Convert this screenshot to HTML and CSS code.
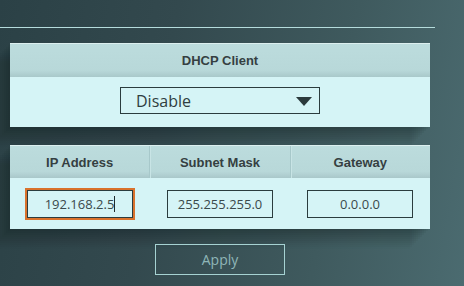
FILE: index.html
```html
<!DOCTYPE html>
<html lang="en">
<head>
  <meta charset="UTF-8" />
  <meta name="viewport" content="width=device-width, initial-scale=1.0" />
  <title>LAN Settings</title>
  <link rel="stylesheet" href="styles.css">
</head>

<body>
  <div class="top-line"></div>

  <div class="panel dhcp">
    <div class="panel-head">
      <div class="cell">DHCP Client</div>
    </div>
    <div class="panel-body">
      <div class="select">
        <span>Disable</span>
        <span class="arrow"></span>
      </div>
    </div>
  </div>

  <div class="panel addr">
    <div class="panel-head">
      <div class="cell">IP Address</div>
      <div class="cell">Subnet Mask</div>
      <div class="cell">Gateway</div>
    </div>
    <div class="panel-body cols">
      <div class="cell"><div class="field focus">192.168.2.5<span class="caret"></span></div></div>
      <div class="cell"><div class="field">255.255.255.0</div></div>
      <div class="cell"><div class="field">0.0.0.0</div></div>
    </div>
  </div>

  <div class="actions">
    <button class="apply">Apply</button>
  </div>
</body>
</html>
```

FILE: styles.css
```css
* {
  margin: 0;
  padding: 0;
  box-sizing: border-box;
}

html, body {
  width: 100%;
  height: 100%;
}

body {
  overflow: hidden;
  font-family: "Open Sans", sans-serif;
  background: linear-gradient(100deg, #2b4146 0%, #33494e 35%, #3f5a5e 70%, #4b6b70 100%);
}

.top-line {
  width: 435px;
  height: 1px;
  margin-top: 27px;
  background: #b5dcdc;
}

.panel {
  width: 420px;
  margin-left: 10px;
  margin-top: 15px;
  background: #d5f4f6;
  box-shadow:
    -2px 2px 0 rgba(18, 34, 38, 0.06),
    -4px 4px 0 rgba(18, 34, 38, 0.06),
    -6px 6px 0 rgba(18, 34, 38, 0.06),
    -8px 8px 0 rgba(18, 34, 38, 0.05),
    -10px 10px 0 rgba(18, 34, 38, 0.05),
    -12px 12px 0 rgba(18, 34, 38, 0.04),
    -14px 14px 0 rgba(18, 34, 38, 0.04),
    -16px 16px 0 rgba(18, 34, 38, 0.03),
    -18px 18px 0 rgba(18, 34, 38, 0.03),
    -20px 20px 0 rgba(18, 34, 38, 0.02);
}

.addr {
  margin-top: 18px;
}

.panel-head {
  display: flex;
  height: 34px;
  border-top: 1px solid #dcefef;
  background: linear-gradient(#bcdcdd 0%, #b8d8d9 80%, #a9c8ca 100%);
}

.addr .panel-head {
  height: 33px;
}

.panel-head .cell {
  flex: 1;
  display: flex;
  align-items: center;
  justify-content: center;
  font-family: "Liberation Sans", Arial, sans-serif;
  font-weight: bold;
  font-size: 13px;
  color: #353f41;
}

.panel-head .cell + .cell {
  border-left: 1px solid #a7c8ca;
  box-shadow: inset 1px 0 0 #c8e4e5;
}

.panel-body {
  height: 50px;
  display: flex;
  justify-content: center;
  align-items: flex-start;
  padding-top: 10px;
}

.select {
  width: 200px;
  height: 27px;
  border: 1px solid #2b3c3e;
  display: flex;
  align-items: center;
  justify-content: space-between;
  padding: 0 7px 0 15px;
  font-size: 16px;
  color: #2f3e40;
}

.arrow {
  width: 0;
  height: 0;
  border-left: 8px solid transparent;
  border-right: 8px solid transparent;
  border-top: 9px solid #2b3a3c;
  margin-top: 1px;
}

.cols {
  height: 51px;
  padding-top: 12px;
}

.cols .cell {
  flex: 1;
  display: flex;
  justify-content: center;
}

.field {
  width: 106px;
  height: 28px;
  border: 1px solid #2b3c3e;
  display: flex;
  align-items: center;
  justify-content: center;
  font-size: 13px;
  color: #3a494b;
}

.field.focus {
  outline: 2px solid #d9722c;
}

.caret {
  width: 1px;
  height: 16px;
  background: #1e2a2c;
}

.actions {
  display: flex;
  justify-content: center;
  width: 420px;
  margin-left: 10px;
  margin-top: 15px;
}

.apply {
  width: 130px;
  height: 31px;
  background: transparent;
  border: 1px solid #a6d2d2;
  color: #8fb6b8;
  font-family: "Open Sans", sans-serif;
  font-size: 14px;
}
```
